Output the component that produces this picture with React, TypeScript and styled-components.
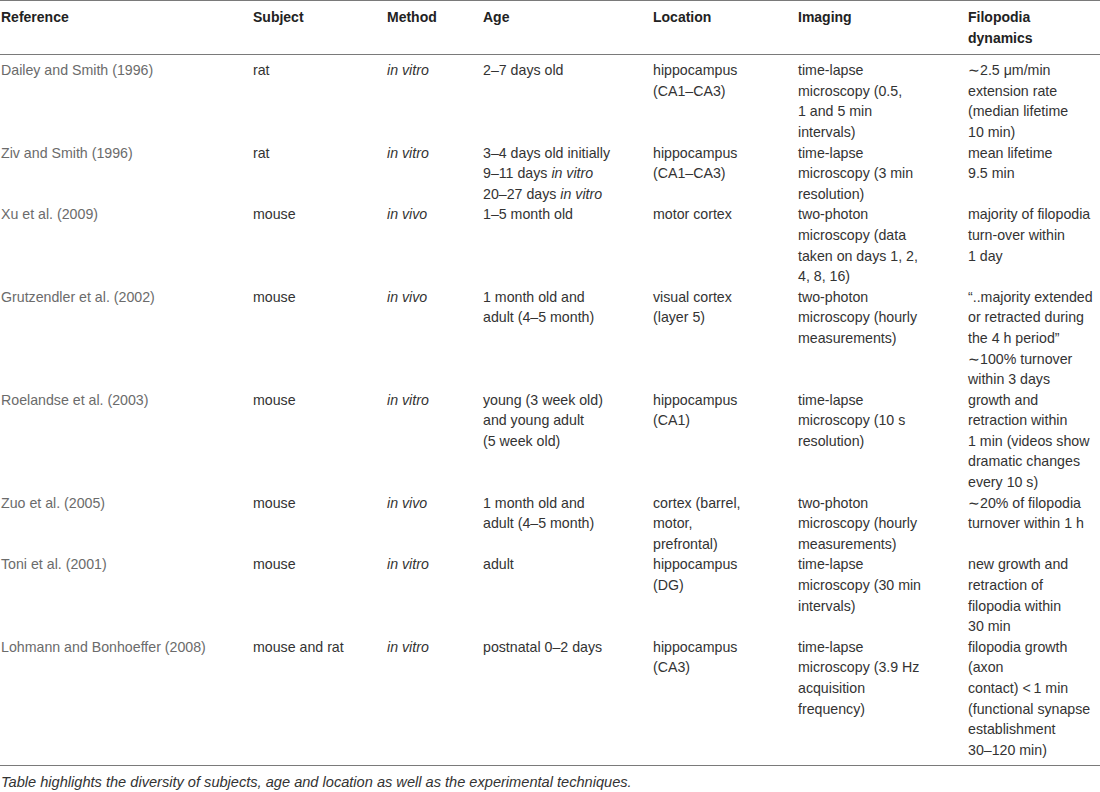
import React from 'react';
import styled, { createGlobalStyle } from 'styled-components';

const GlobalStyle = createGlobalStyle`
  html, body {
    margin: 0;
    padding: 0;
    background: #fff;
  }
  body {
    font-family: 'Liberation Sans', Arial, Helvetica, sans-serif;
  }
`;

const Page = styled.div`
  width: 1100px;
`;

const Grid = styled.div`
  display: grid;
  grid-template-columns: 252px 134px 96px 170px 145px 170px 1fr;
  padding-left: 1px;
`;

const Head = styled(Grid)`
  border-top: 1px solid #7a7a7a;
  border-bottom: 1px solid #7a7a7a;
  padding-top: 6px;
  padding-bottom: 6px;
`;

const Body = styled.div`
  padding: 5px 0 5px;
  border-bottom: 1px solid #7a7a7a;
`;

const HeadCell = styled.div`
  font-size: 14px;
  line-height: 20.6px;
  font-weight: 700;
  color: #222;
`;

const Cell = styled.div<{ muted?: boolean }>`
  font-size: 14.2px;
  line-height: 20.6px;
  color: ${({ muted }) => (muted ? '#6b6b6b' : '#333')};
  white-space: nowrap;
`;

const I = styled.i`
  font-style: italic;
`;

const Caption = styled.p`
  margin: 0;
  padding: 7px 0 0 1px;
  font-size: 14.6px;
  line-height: 18px;
  font-style: italic;
  color: #333;
  white-space: nowrap;
`;

type Line = React.ReactNode;

const headers: Line[][] = [
  ['Reference'],
  ['Subject'],
  ['Method'],
  ['Age'],
  ['Location'],
  ['Imaging'],
  ['Filopodia', 'dynamics'],
];

const vitro = <I>in vitro</I>;
const vivo = <I>in vivo</I>;

const rows: Line[][][] = [
  [
    ['Dailey and Smith (1996)'],
    ['rat'],
    [vitro],
    ['2–7 days old'],
    ['hippocampus', '(CA1–CA3)'],
    ['time-lapse', 'microscopy (0.5,', '1 and 5 min', 'intervals)'],
    ['∼2.5 μm/min', 'extension rate', '(median lifetime', '10 min)'],
  ],
  [
    ['Ziv and Smith (1996)'],
    ['rat'],
    [vitro],
    [
      '3–4 days old initially',
      <>9–11 days <I>in vitro</I></>,
      <>20–27 days <I>in vitro</I></>,
    ],
    ['hippocampus', '(CA1–CA3)'],
    ['time-lapse', 'microscopy (3 min', 'resolution)'],
    ['mean lifetime', '9.5 min'],
  ],
  [
    ['Xu et al. (2009)'],
    ['mouse'],
    [vivo],
    ['1–5 month old'],
    ['motor cortex'],
    ['two-photon', 'microscopy (data', 'taken on days 1, 2,', '4, 8, 16)'],
    ['majority of filopodia', 'turn-over within', '1 day'],
  ],
  [
    ['Grutzendler et al. (2002)'],
    ['mouse'],
    [vivo],
    ['1 month old and', 'adult (4–5 month)'],
    ['visual cortex', '(layer 5)'],
    ['two-photon', 'microscopy (hourly', 'measurements)'],
    [
      '“..majority extended',
      'or retracted during',
      'the 4 h period”',
      '∼100% turnover',
      'within 3 days',
    ],
  ],
  [
    ['Roelandse et al. (2003)'],
    ['mouse'],
    [vitro],
    ['young (3 week old)', 'and young adult', '(5 week old)'],
    ['hippocampus', '(CA1)'],
    ['time-lapse', 'microscopy (10 s', 'resolution)'],
    [
      'growth and',
      'retraction within',
      '1 min (videos show',
      'dramatic changes',
      'every 10 s)',
    ],
  ],
  [
    ['Zuo et al. (2005)'],
    ['mouse'],
    [vivo],
    ['1 month old and', 'adult (4–5 month)'],
    ['cortex (barrel,', 'motor,', 'prefrontal)'],
    ['two-photon', 'microscopy (hourly', 'measurements)'],
    ['∼20% of filopodia', 'turnover within 1 h'],
  ],
  [
    ['Toni et al. (2001)'],
    ['mouse'],
    [vitro],
    ['adult'],
    ['hippocampus', '(DG)'],
    ['time-lapse', 'microscopy (30 min', 'intervals)'],
    ['new growth and', 'retraction of', 'filopodia within', '30 min'],
  ],
  [
    ['Lohmann and Bonhoeffer (2008)'],
    ['mouse and rat'],
    [vitro],
    ['postnatal 0–2 days'],
    ['hippocampus', '(CA3)'],
    ['time-lapse', 'microscopy (3.9 Hz', 'acquisition', 'frequency)'],
    [
      'filopodia growth',
      '(axon',
      'contact) <\u20091 min',
      '(functional synapse',
      'establishment',
      '30–120 min)',
    ],
  ],
];

const renderLines = (lines: Line[]) =>
  lines.map((line, i) => (
    <React.Fragment key={i}>
      {i > 0 && <br />}
      {line}
    </React.Fragment>
  ));

const App: React.FC = () => {
  return (
    <Page>
      <GlobalStyle />
      <Head>
        {headers.map((h, i) => (
          <HeadCell key={i}>{renderLines(h)}</HeadCell>
        ))}
      </Head>
      <Body>
        {rows.map((row, r) => (
          <Grid key={r}>
            {row.map((cell, c) => (
              <Cell key={c} muted={c === 0}>
                {renderLines(cell)}
              </Cell>
            ))}
          </Grid>
        ))}
      </Body>
      <Caption>
        Table highlights the diversity of subjects, age and location as well as the experimental techniques.
      </Caption>
    </Page>
  );
};

export default App;
